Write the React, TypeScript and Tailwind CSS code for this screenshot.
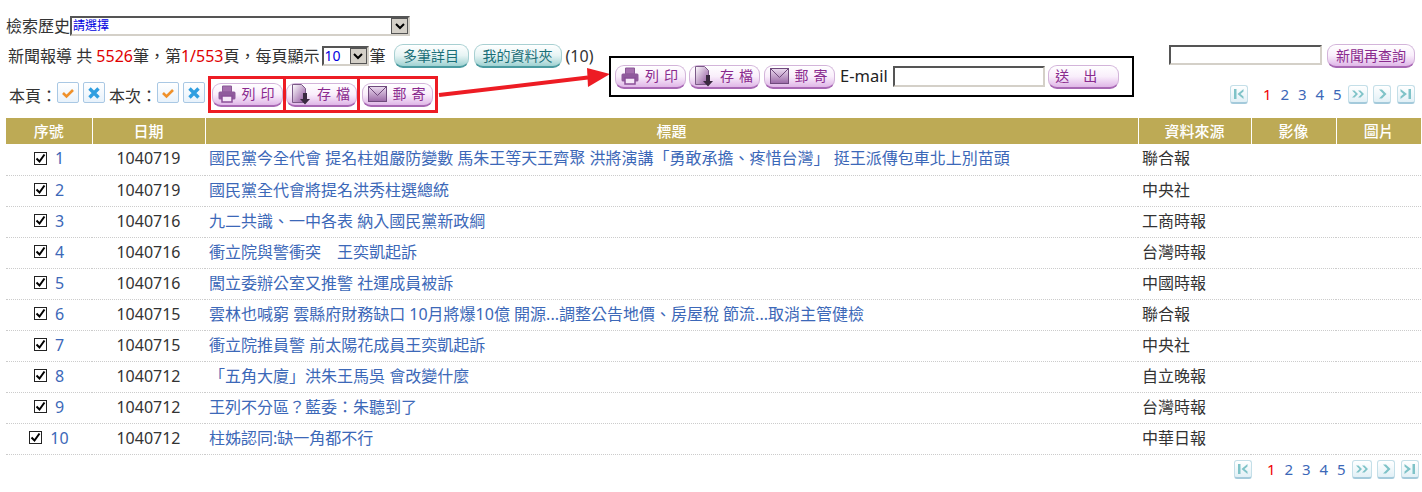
import React from "react";

const rows = [
  ["1", "1040719", "國民黨今全代會 提名柱姐嚴防變數 馬朱王等天王齊聚 洪將演講「勇敢承擔、疼惜台灣」 挺王派傳包車北上別苗頭", "聯合報"],
  ["2", "1040719", "國民黨全代會將提名洪秀柱選總統", "中央社"],
  ["3", "1040716", "九二共識、一中各表 納入國民黨新政綱", "工商時報"],
  ["4", "1040716", "衝立院與警衝突　王奕凱起訴", "台灣時報"],
  ["5", "1040716", "闖立委辦公室又推警 社運成員被訴", "中國時報"],
  ["6", "1040715", "雲林也喊窮 雲縣府財務缺口 10月將爆10億 開源...調整公告地價、房屋稅 節流...取消主管健檢", "聯合報"],
  ["7", "1040715", "衝立院推員警 前太陽花成員王奕凱起訴", "中央社"],
  ["8", "1040712", "「五角大廈」洪朱王馬吳 會改變什麼", "自立晚報"],
  ["9", "1040712", "王列不分區？藍委：朱聽到了", "台灣時報"],
  ["10", "1040712", "柱姊認同:缺一角都不行", "中華日報"],
];

function PrintIcon() {
  return (
    <svg width="18" height="18" viewBox="0 0 18 18" className="shrink-0">
      <path d="M4.500 1h9v6h-9z" fill="#a56fae" stroke="#8a5a96" />
      <rect x="0.500" y="6.500" width="17" height="8" rx="1.500" fill="#8f5a9c" />
      <rect x="4" y="11" width="10" height="6" fill="#f6e8f8" stroke="#8a4f98" strokeWidth="1.500" />
    </svg>
  );
}

function SaveIcon() {
  return (
    <svg width="20" height="21" viewBox="0 0 20 21" className="shrink-0">
      <defs>
        <linearGradient id="sv" x1="0" y1="0" x2="1" y2="1">
          <stop offset="0" stopColor="#fff" />
          <stop offset="1" stopColor="#8d4f9b" />
        </linearGradient>
      </defs>
      <path d="M1.500.5h9l4 4v14h-13z" fill="url(#sv)" stroke="#7b5a88" />
      <path d="M12 9h4v6h3l-5 5.500L9 15h3z" fill="#3a2a40" />
    </svg>
  );
}

function MailIcon() {
  return (
    <svg width="19" height="16" viewBox="0 0 19 16" className="shrink-0">
      <defs>
        <linearGradient id="ml" x1="0" y1="0" x2="0" y2="1">
          <stop offset="0" stopColor="#ecdcf0" />
          <stop offset="1" stopColor="#9a68a6" />
        </linearGradient>
      </defs>
      <rect x=".5" y=".5" width="18" height="15" fill="url(#ml)" stroke="#6f4a7c" />
      <path d="M1 1l8.500 8.500L18 1" fill="none" stroke="#6f4a7c" />
    </svg>
  );
}

function PurpleBtn({ children, className }: { children: React.ReactNode; className: string }) {
  return (
    <button className={`flex h-6 shrink-0 items-center justify-center rounded-[9px] border border-[#d3b4da] border-b-2 border-b-[#a868b4] bg-gradient-to-b from-white via-[#f9eefb] to-[#dfb6e7] text-[#8a2a8e] ${className}`}>
      {children}
    </button>
  );
}

function PrintBtn() {
  return <PurpleBtn className="w-[71px] gap-[6px] pl-[3px] text-[14px] tracking-[5px]"><PrintIcon />列印</PurpleBtn>;
}
function SaveBtn() {
  return <PurpleBtn className="w-[71px] gap-[6px] pl-[3px] text-[14px] tracking-[5px]"><SaveIcon />存檔</PurpleBtn>;
}
function MailBtn() {
  return <PurpleBtn className="w-[71px] gap-[6px] pl-[3px] text-[14px] tracking-[5px]"><MailIcon />郵寄</PurpleBtn>;
}

function TealBtn({ children, className }: { children: React.ReactNode; className: string }) {
  return (
    <button className={`flex h-6 items-center justify-center rounded-[9px] border border-[#a8d0d2] border-b-2 border-b-[#4b9ba0] bg-gradient-to-b from-white via-[#e6f4f4] to-[#9fd2d2] text-[14px] text-[#1a6f78] ${className}`}>
      {children}
    </button>
  );
}

function SelectBox({ className, text }: { className: string; text: string }) {
  return (
    <div className={`flex items-center border-2 border-t-[#555] border-l-[#555] border-r-[#d4d0c8] border-b-[#d4d0c8] bg-white pl-px text-[#0000e0] ${className}`}>
      <span className="flex-1 leading-none">{text}</span>
      <span className="flex h-4 w-[17px] items-center justify-center border border-[#555] bg-[#d4d0c8]">
        <svg width="10" height="7" viewBox="0 0 10 7"><path d="M1 1l4 4 4-4" fill="none" stroke="#000" strokeWidth="2" /></svg>
      </span>
    </div>
  );
}

function TickBtn({ cross }: { cross?: boolean }) {
  return (
    <span className="flex h-[21px] w-[22px] items-center justify-center rounded-[2px] border border-[#a9c8e4] bg-gradient-to-b from-white to-[#e8f2fb]">
      {cross ? (
        <svg width="14" height="14" viewBox="0 0 14 14"><path d="M2.500 2.500l9 9M11.500 2.500l-9 9" stroke="#2f9ee0" strokeWidth="3.400" /></svg>
      ) : (
        <svg width="14" height="14" viewBox="0 0 14 14"><path d="M2 7l3.500 3.500L12 4" fill="none" stroke="#f0912a" strokeWidth="2.600" /></svg>
      )}
    </span>
  );
}

function PageIcon({ d, wide }: { d: string; wide?: boolean }) {
  return (
    <span className={`flex h-[19px] shrink-0 items-center justify-center rounded-[3px] border border-[#c4dfe8] border-b-2 border-b-[#a4cadb] bg-gradient-to-b from-white to-[#e2f0f6] ${wide ? "w-5" : "w-[18px]"}`}>
      <svg width="14" height="12" viewBox="0 0 14 12"><path d={d} fill="#7fc3c8" /></svg>
    </span>
  );
}

const firstIcon = "M2 1h2.500v10H2zM11.500 1v2.500L8.500 6l3 2.500V11L5.500 6z";
const moreIcon = "M1 2.500h2.500L7 6l-3.500 3.500H1L4.500 6zM7 2.500h2.500L13 6l-3.500 3.500H7L10.500 6z";
const nextIcon = "M4 1.500h3L11.500 6 7 10.500H4L8.500 6z";
const lastIcon = "M1.500 1L8 6l-6.500 5V8.500L4.500 6l-3-2.500zM9.500 1H12v10H9.500z";

function Pager() {
  return (
    <div className="flex items-center text-[15px] leading-none text-[#3c68b8]">
      <PageIcon d={firstIcon} />
      <span className="ml-[15px] w-[17.500px] text-[#f00000]">1</span>
      <span className="w-[17.500px]">2</span>
      <span className="w-[17.500px]">3</span>
      <span className="w-[17.500px]">4</span>
      <span className="w-[15px]">5</span>
      <span className="mr-[5px]"><PageIcon d={moreIcon} wide /></span>
      <span className="mr-1.5"><PageIcon d={nextIcon} /></span>
      <PageIcon d={lastIcon} />
    </div>
  );
}

export default function App() {
  return (
    <div className="relative h-[492px] w-[1422px] overflow-hidden bg-white font-['Noto_Sans','Noto_Sans_CJK_TC',sans-serif] text-[16px] text-[#333]">
      <div className="flex h-[118px] justify-between">
        <div className="pl-1.5">
          <div className="mt-4 flex h-[20px] items-center">
            <span className="leading-none">檢索歷史</span>
            <SelectBox className="h-[20px] w-[340px] text-[12px]" text="請選擇" />
          </div>
          <div className="mt-2 flex h-[24px] items-center pl-0.5 leading-none">
            <span className="whitespace-nowrap">新聞報導 共 <span className="text-[#e00000]">5526</span>筆，第<span className="text-[#e00000]">1/553</span>頁，每頁顯示</span>
            <SelectBox className="ml-[2px] h-[20px] w-[47px] text-[14px]" text="10" />
            <span className="ml-px">筆</span>
            <TealBtn className="ml-2 w-[75px]">多筆詳目</TealBtn>
            <TealBtn className="ml-[5px] w-[88px]">我的資料夾</TealBtn>
            <span className="ml-1">(10)</span>
          </div>
          <div className="mt-2 flex h-[37px] items-start pl-[3px] leading-none">
            <span className="mt-[12px] w-[48px] whitespace-nowrap">本頁：</span>
            <span className="mt-1.5"><TickBtn /></span>
            <span className="ml-1 mt-1.5"><TickBtn cross /></span>
            <span className="ml-1 mt-[12px] w-[48px] whitespace-nowrap">本次：</span>
            <span className="mt-1.5"><TickBtn /></span>
            <span className="ml-1 mt-1.5"><TickBtn cross /></span>
            <div className="ml-[3px] flex h-[37px] items-center border-[3px] border-[#ed1c24]">
              <div className="flex h-full w-[75px] items-center justify-center border-r-[3px] border-[#ed1c24]"><PrintBtn /></div>
              <div className="flex h-full w-[74px] items-center justify-center border-r-[3px] border-[#ed1c24]"><SaveBtn /></div>
              <div className="flex h-full w-[75px] items-center justify-center"><MailBtn /></div>
            </div>
          </div>
        </div>
        <div className="flex w-[260px] flex-col items-end pr-[7px] pt-11">
          <div className="flex items-start">
            <div className="mt-px h-[20px] w-[153px] border-2 border-t-[#555] border-l-[#555] border-r-[#d4d0c8] border-b-[#d4d0c8] bg-white" />
            <PurpleBtn className="ml-[5px] w-[88px] text-[14px]">新聞再查詢</PurpleBtn>
          </div>
          <div className="mt-[17px]"><Pager /></div>
        </div>
      </div>

      {/* annotation over the toolbar */}
      <svg className="absolute left-[436px] top-[55px]" width="180" height="50" viewBox="0 0 180 50">
        <path d="M3 40L152 22.500" stroke="#ed1c24" strokeWidth="4" />
        <path d="M151 13l23 6-22 13z" fill="#ed1c24" />
      </svg>
      <div className="absolute left-[609px] top-[56px] flex h-[41px] w-[525px] items-center border-2 border-black bg-white pl-1 leading-none">
        <PrintBtn />
        <span className="ml-[3px]"><SaveBtn /></span>
        <span className="ml-[4px]"><MailBtn /></span>
        <span className="ml-[5px] text-[16.500px] text-[#222]">E-mail</span>
        <div className="ml-[5px] h-[21px] w-[152px] border-2 border-t-[#555] border-l-[#555] border-r-[#d4d0c8] border-b-[#d4d0c8] bg-white" />
        <PurpleBtn className="ml-[3px] w-[71px] text-[14px] tracking-[14px]">送出</PurpleBtn>
      </div>

      <div className="pl-1.5 pr-px">
        <table className="w-[1415px] table-fixed border-collapse">
          <colgroup>
            <col className="w-[86px]" />
            <col className="w-[113px]" />
            <col className="w-[933px]" />
            <col className="w-[113px]" />
            <col className="w-[85px]" />
            <col className="w-[85px]" />
          </colgroup>
          <thead>
            <tr className="h-[26px] bg-[#bdaa55] text-[15px] text-white">
              {["序號", "日期", "標題", "資料來源", "影像", "圖片"].map((h, i) => (
                <th key={h} className={`p-0 font-medium ${i < 5 ? "border-r border-white" : ""}`}>{h}</th>
              ))}
            </tr>
          </thead>
          <tbody>
            {rows.map((r) => (
              <tr key={r[0]} className="h-[31px] border-b border-dotted border-[#ccc] leading-none">
                <td className="p-0 pb-0.5">
                  <div className="flex items-center justify-center gap-2">
                    <span className="flex h-[13px] w-[13px] items-center justify-center border border-[#222] bg-white">
                      <svg width="11" height="11" viewBox="0 0 11 11"><path d="M1.500 5.500l3 3 5-7" fill="none" stroke="#000" strokeWidth="2" /></svg>
                    </span>
                    <span className="text-[#3c68b8]">{r[0]}</span>
                  </div>
                </td>
                <td className="p-0 pb-0.5 text-center">{r[1]}</td>
                <td className="p-0 pb-0.5 pl-1 text-[#3c68b8]">{r[2]}</td>
                <td className="p-0 pb-0.5 pl-1">{r[3]}</td>
                <td className="p-0" />
                <td className="p-0" />
              </tr>
            ))}
          </tbody>
        </table>
        <div className="mt-[5px] flex justify-end pr-[2px]"><Pager /></div>
      </div>
    </div>
  );
}
